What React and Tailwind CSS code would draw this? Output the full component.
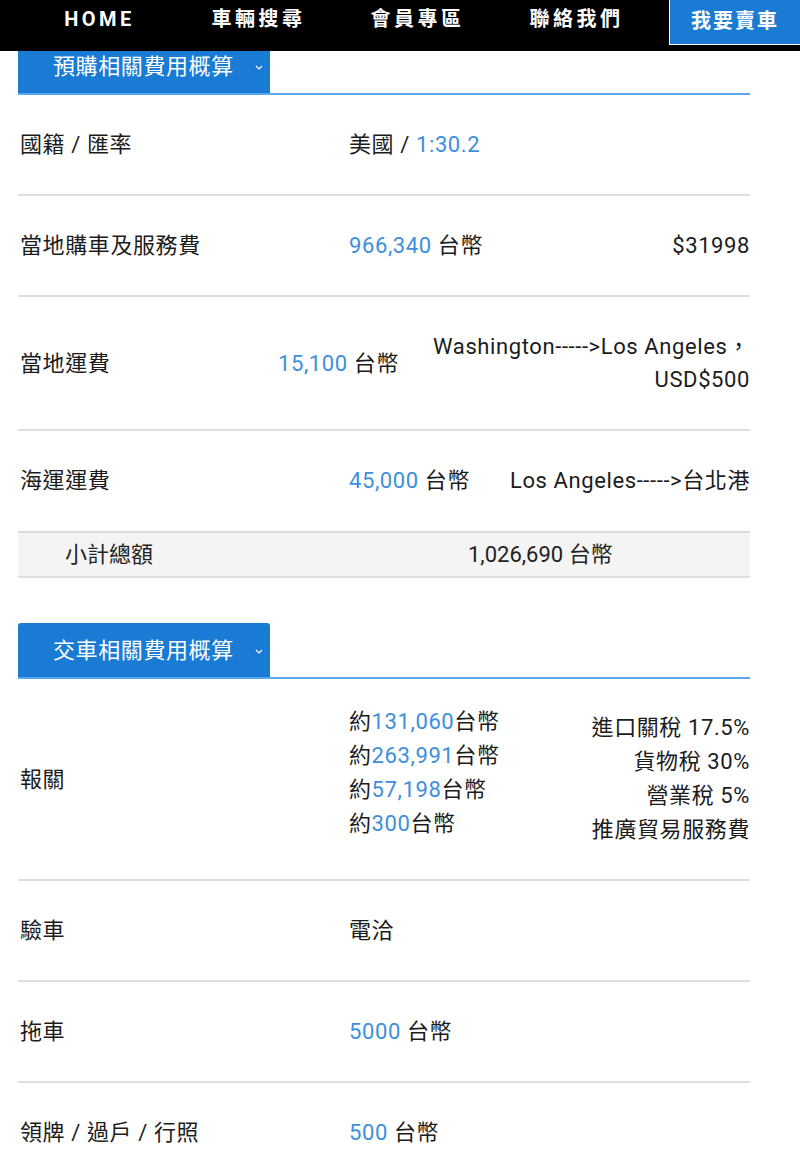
import React from "react";

const navItems = ["HOME", "車輛搜尋", "會員專區", "聯絡我們"];

const Chevron = () => (
  <svg width="8" height="5" viewBox="0 0 8 5" className="ml-[21px] mt-[2px]">
    <path d="M1 1 L4 4 L7 1" fill="none" stroke="white" strokeWidth="1.2" />
  </svg>
);

const SectionTab = ({ title }) => (
  <div className="border-b-2 border-[#5aa9f0]">
    <div className="h-[54px] w-[252px] bg-[#1a7bd4] rounded-t-[3px] flex items-center pl-[35px] text-white text-[22px]">
      <span className="tracking-[0.6px]">{title}</span>
      <Chevron />
    </div>
  </div>
);

const Blue = ({ children }) => <span className="text-[#3d8fdd]">{children}</span>;

const Row = ({ labelW = "w-[329px]", label, value, extra, last }) => (
  <div
    className={`flex items-center py-[33px] leading-[33px] pl-[2px] ${
      last ? "" : "border-b-2 border-[#dedede]"
    }`}
  >
    <div className={`${labelW} shrink-0`}>{label}</div>
    <div className="shrink-0">{value}</div>
    <div className="flex-1 text-right">{extra}</div>
  </div>
);

export default function App() {
  return (
    <div
      className="relative bg-white min-h-[1162px] text-[#1c1c1c] text-[22px] tracking-[0.6px]"
      style={{ fontFamily: 'Roboto, "Noto Sans CJK TC", sans-serif' }}
    >
      {/* top nav overlays the page */}
      <div className="absolute top-0 left-0 w-full h-[51px] bg-black flex items-start z-10">
        <div className="flex pl-[20px] pt-[4px]">
          {navItems.map((item) => (
            <div
              key={item}
              className="w-[159px] text-center text-white font-bold text-[20px] tracking-[3.5px]"
            >
              {item}
            </div>
          ))}
        </div>
        <div className="ml-auto h-[45px] w-[131px] bg-[#1a7bd4] border-l border-b border-white flex items-center justify-center text-white font-bold text-[20px] tracking-[2px] pb-[2px]">
          我要賣車
        </div>
      </div>

      <div className="ml-[18px] w-[732px] pt-[39px] pb-[20px]">
        <SectionTab title="預購相關費用概算" />

        <Row
          label="國籍 / 匯率"
          value={
            <span>
              美國 / <Blue>1:30.2</Blue>
            </span>
          }
        />
        <Row
          label="當地購車及服務費"
          value={
            <span>
              <Blue>966,340</Blue> 台幣
            </span>
          }
          extra="$31998"
        />
        <Row
          labelW="w-[258px]"
          label="當地運費"
          value={
            <span>
              <Blue>15,100</Blue> 台幣
            </span>
          }
          extra={
            <span>
              Washington----->Los Angeles，
              <br />
              USD$500
            </span>
          }
        />
        <Row
          label="海運運費"
          value={
            <span>
              <Blue>45,000</Blue> 台幣
            </span>
          }
          extra="Los Angeles----->台北港"
          last
        />

        <div className="flex items-center h-[47px] mt-[1px] border-y-2 border-[#dcdcdc] bg-[#f4f4f4] pl-[47px] text-[#222] tracking-normal">
          <div className="w-[403px] shrink-0">小計總額</div>
          <div>1,026,690 台幣</div>
        </div>

        <div className="mt-[45px]">
          <SectionTab title="交車相關費用概算" />
        </div>

        <div className="flex items-center py-[32px] pl-[2px] border-b-2 border-[#dedede]">
          <div className="w-[329px] shrink-0">報關</div>
          <div className="leading-[34px] relative -top-[6px]">
            <div>
              約<Blue>131,060</Blue>台幣
            </div>
            <div>
              約<Blue>263,991</Blue>台幣
            </div>
            <div>
              約<Blue>57,198</Blue>台幣
            </div>
            <div>
              約<Blue>300</Blue>台幣
            </div>
          </div>
          <div className="flex-1 text-right leading-[34px]">
            <div>進口關稅 17.5%</div>
            <div>貨物稅 30%</div>
            <div>營業稅 5%</div>
            <div>推廣貿易服務費</div>
          </div>
        </div>

        <Row label="驗車" value="電洽" />
        <Row
          label="拖車"
          value={
            <span>
              <Blue>5000</Blue> 台幣
            </span>
          }
        />
        <Row
          label="領牌 / 過戶 / 行照"
          value={
            <span>
              <Blue>500</Blue> 台幣
            </span>
          }
          last
        />
      </div>
    </div>
  );
}
